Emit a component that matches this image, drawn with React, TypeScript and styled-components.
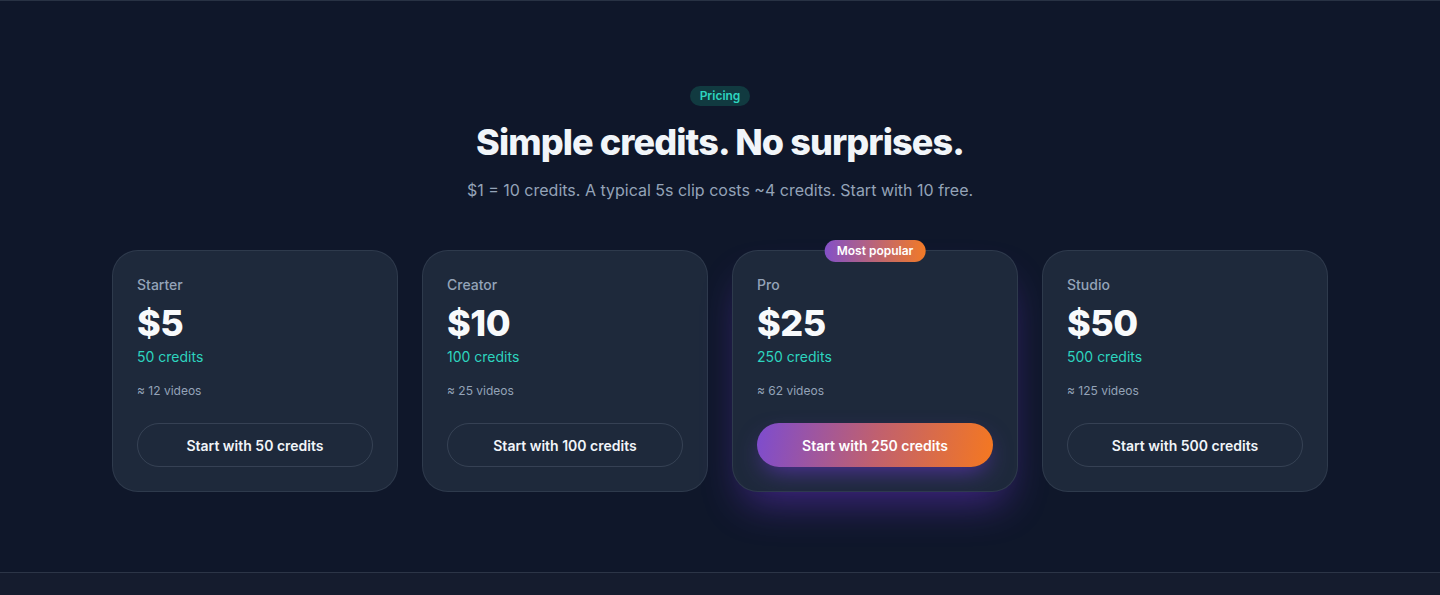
import React from "react";
import styled, { createGlobalStyle, css } from "styled-components";

const GlobalStyle = createGlobalStyle`
  * { box-sizing: border-box; }
  html, body { margin: 0; padding: 0; background: #0f172a; }
  body {
    font-family: Inter, "Noto Sans", "Liberation Sans", sans-serif;
    color: #f1f5f9;
    -webkit-font-smoothing: antialiased;
  }
`;

const Page = styled.div`
  background: #0f172a;
  min-height: 595px;
  display: flex;
  flex-direction: column;
`;

const Section = styled.section`
  border-top: 1px solid #283244;
  padding: 85px 32px 80px;
  display: flex;
  flex-direction: column;
  align-items: center;
`;

const Tag = styled.span`
  display: inline-block;
  padding: 2px 10px;
  border-radius: 999px;
  background: #113a40;
  color: #2dd4bf;
  font-size: 12px;
  line-height: 16px;
  font-weight: 600;
`;

const Title = styled.h2`
  margin: 16px 0 0;
  font-size: 36px;
  line-height: 40px;
  font-weight: 800;
  letter-spacing: -0.9px;
  color: #f1f5f9;
  text-align: center;
`;

const Subtitle = styled.p`
  margin: 16px 0 0;
  font-size: 16px;
  line-height: 24px;
  color: #94a3b8;
  text-align: center;
`;

const Grid = styled.div`
  margin-top: 48px;
  width: 100%;
  max-width: 1216px;
  display: grid;
  grid-template-columns: repeat(4, 1fr);
  gap: 24px;
`;

const Card = styled.div<{ $featured?: boolean }>`
  position: relative;
  background: #1e293b;
  border: 1px solid rgba(148, 163, 184, 0.14);
  border-radius: 26px;
  padding: 24px 24px 24px;
  display: flex;
  flex-direction: column;
  ${(p) =>
    p.$featured &&
    css`
      box-shadow: 0 22px 40px -12px rgba(124, 58, 237, 0.45);
    `}
`;

const Badge = styled.span`
  position: absolute;
  top: -11px;
  left: 50%;
  transform: translateX(-50%);
  padding: 3px 12px;
  border-radius: 999px;
  background: linear-gradient(90deg, #8350c8, #f27a26);
  color: #ffffff;
  font-size: 12px;
  line-height: 16px;
  font-weight: 600;
  white-space: nowrap;
`;

const PlanName = styled.div`
  font-size: 14px;
  line-height: 20px;
  font-weight: 500;
  color: #94a3b8;
`;

const Price = styled.div`
  margin-top: 8px;
  font-size: 36px;
  line-height: 40px;
  font-weight: 800;
  letter-spacing: -0.5px;
  color: #f8fafc;
`;

const Credits = styled.div`
  margin-top: 4px;
  font-size: 14px;
  line-height: 20px;
  color: #2dd4bf;
`;

const Videos = styled.div`
  margin-top: 16px;
  font-size: 12px;
  line-height: 16px;
  color: #94a3b8;
`;

const Button = styled.button<{ $featured?: boolean }>`
  margin-top: 24px;
  height: 44px;
  width: 100%;
  border-radius: 999px;
  font-family: inherit;
  font-size: 14px;
  font-weight: 600;
  color: #f1f5f9;
  cursor: pointer;
  border: 1px solid rgba(148, 163, 184, 0.2);
  background: transparent;
  ${(p) =>
    p.$featured &&
    css`
      border: none;
      color: #ffffff;
      background: linear-gradient(100deg, #7d4ccf 0%, #c0606f 50%, #f57820 100%);
      box-shadow: 0 10px 24px -6px rgba(124, 58, 237, 0.55);
    `}
`;

const NextSection = styled.div`
  flex: 1;
  border-top: 1px solid #2c3547;
  background: #151c2e;
  min-height: 22px;
`;

type Plan = {
  name: string;
  price: string;
  credits: number;
  videos: number;
  featured?: boolean;
};

const plans: Plan[] = [
  { name: "Starter", price: "$5", credits: 50, videos: 12 },
  { name: "Creator", price: "$10", credits: 100, videos: 25 },
  { name: "Pro", price: "$25", credits: 250, videos: 62, featured: true },
  { name: "Studio", price: "$50", credits: 500, videos: 125 },
];

export default function App() {
  return (
    <>
      <GlobalStyle />
      <Page>
        <Section>
          <Tag>Pricing</Tag>
          <Title>Simple credits. No surprises.</Title>
          <Subtitle>
            $1 = 10 credits. A typical 5s clip costs ~4 credits. Start with 10 free.
          </Subtitle>
          <Grid>
            {plans.map((p) => (
              <Card key={p.name} $featured={p.featured}>
                {p.featured && <Badge>Most popular</Badge>}
                <PlanName>{p.name}</PlanName>
                <Price>{p.price}</Price>
                <Credits>{p.credits} credits</Credits>
                <Videos>≈ {p.videos} videos</Videos>
                <Button $featured={p.featured}>Start with {p.credits} credits</Button>
              </Card>
            ))}
          </Grid>
        </Section>
        <NextSection />
      </Page>
    </>
  );
}
